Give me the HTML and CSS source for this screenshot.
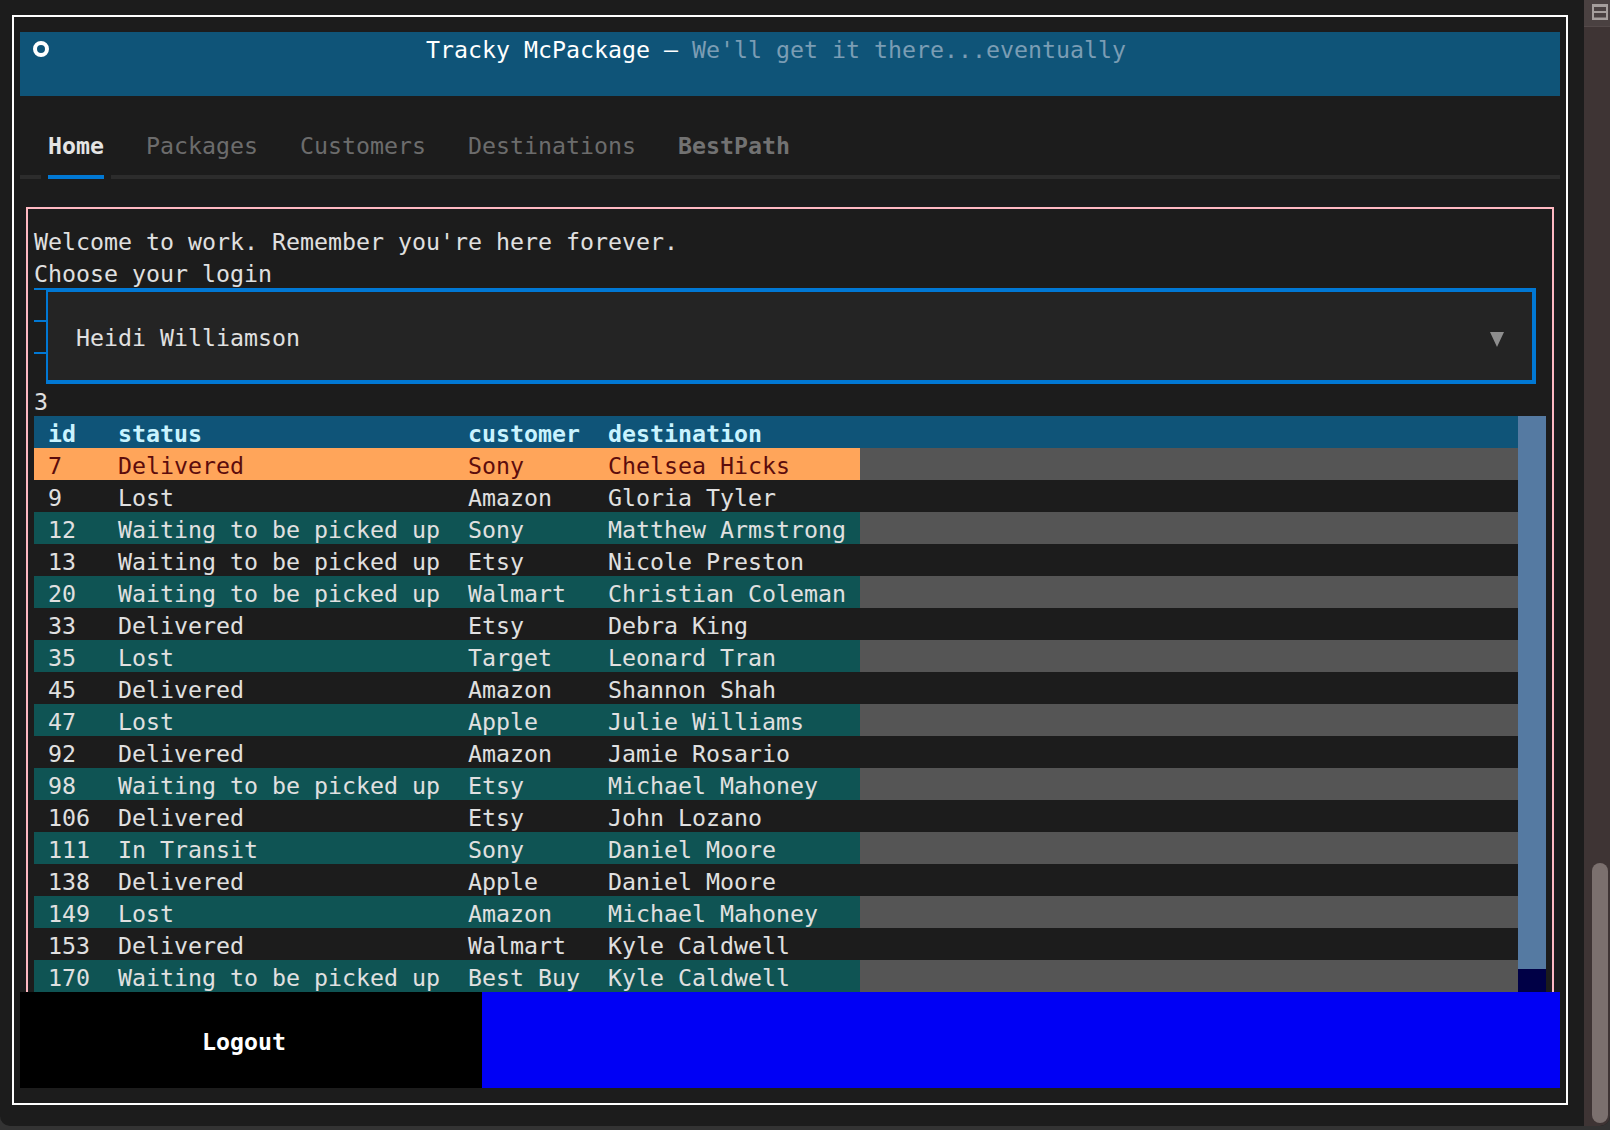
FILE: index.html
```html
<!DOCTYPE html>
<html lang="en">
<head>
<meta charset="utf-8">
<title>Tracky McPackage</title>
<link rel="stylesheet" href="styles.css">
</head>
<body>
<div class="window">
  <div class="term">
    <div class="frame">
      <header class="app-header">
        <span class="app-icon"></span>
        <span class="app-title">Tracky McPackage — <span class="app-sub">We'll get it there...eventually</span></span>
      </header>
      <div class="blank"></div>
      <nav class="tabs">
        <span class="tab active">Home</span>
        <span class="tab">Packages</span>
        <span class="tab">Customers</span>
        <span class="tab">Destinations</span>
        <span class="tab strong">BestPath</span>
      </nav>
      <div class="tab-rule">
        <span class="rule-gray rule-start"></span>
        <span class="rule-blue"></span>
        <span class="rule-gray rule-rest"></span>
      </div>
      <main class="content">
        <section class="panel">
          <p class="line">Welcome to work. Remember you're here forever.</p>
          <p class="line">Choose your login</p>
          <div class="select">
            <div class="select-gutter"><i></i><i></i><i></i></div>
            <div class="select-box">
              <span class="select-value">Heidi Williamson</span>
              <svg class="select-arrow" width="14" height="32" viewBox="0 0 14 32"><polygon points="0,12 14,12 7,27" fill="#8e8e8e"/></svg>
            </div>
          </div>
          <p class="line">3</p>
          <div class="table-area">
            <div class="table">
              <div class="tr th"><span>id</span><span>status</span><span>customer</span><span>destination</span><span class="fill"></span></div>
              <div class="tr cursor"><span>7</span><span>Delivered</span><span>Sony</span><span>Chelsea Hicks</span><span class="fill"></span></div>
              <div class="tr"><span>9</span><span>Lost</span><span>Amazon</span><span>Gloria Tyler</span><span class="fill"></span></div>
              <div class="tr stripe"><span>12</span><span>Waiting to be picked up</span><span>Sony</span><span>Matthew Armstrong</span><span class="fill"></span></div>
              <div class="tr"><span>13</span><span>Waiting to be picked up</span><span>Etsy</span><span>Nicole Preston</span><span class="fill"></span></div>
              <div class="tr stripe"><span>20</span><span>Waiting to be picked up</span><span>Walmart</span><span>Christian Coleman</span><span class="fill"></span></div>
              <div class="tr"><span>33</span><span>Delivered</span><span>Etsy</span><span>Debra King</span><span class="fill"></span></div>
              <div class="tr stripe"><span>35</span><span>Lost</span><span>Target</span><span>Leonard Tran</span><span class="fill"></span></div>
              <div class="tr"><span>45</span><span>Delivered</span><span>Amazon</span><span>Shannon Shah</span><span class="fill"></span></div>
              <div class="tr stripe"><span>47</span><span>Lost</span><span>Apple</span><span>Julie Williams</span><span class="fill"></span></div>
              <div class="tr"><span>92</span><span>Delivered</span><span>Amazon</span><span>Jamie Rosario</span><span class="fill"></span></div>
              <div class="tr stripe"><span>98</span><span>Waiting to be picked up</span><span>Etsy</span><span>Michael Mahoney</span><span class="fill"></span></div>
              <div class="tr"><span>106</span><span>Delivered</span><span>Etsy</span><span>John Lozano</span><span class="fill"></span></div>
              <div class="tr stripe"><span>111</span><span>In Transit</span><span>Sony</span><span>Daniel Moore</span><span class="fill"></span></div>
              <div class="tr"><span>138</span><span>Delivered</span><span>Apple</span><span>Daniel Moore</span><span class="fill"></span></div>
              <div class="tr stripe"><span>149</span><span>Lost</span><span>Amazon</span><span>Michael Mahoney</span><span class="fill"></span></div>
              <div class="tr"><span>153</span><span>Delivered</span><span>Walmart</span><span>Kyle Caldwell</span><span class="fill"></span></div>
              <div class="tr stripe"><span>170</span><span>Waiting to be picked up</span><span>Best Buy</span><span>Kyle Caldwell</span><span class="fill"></span></div>
            </div>
            <div class="vscroll"><div class="thumb"></div></div>
          </div>
        </section>
      </main>
      <footer class="footer">
        <div class="logout">Logout</div>
        <div class="footer-fill"></div>
      </footer>
    </div>
  </div>
  <aside class="strip">
    <div class="strip-top">
      <svg width="16" height="16" viewBox="0 0 16 16"><rect x="0" y="0" width="16" height="16" fill="#a59e9c"/><rect x="2" y="3" width="12" height="4" fill="#4a4141"/><rect x="2" y="9" width="12" height="4.5" fill="#4a4141"/></svg>
    </div>
    <div class="strip-track"><div class="strip-thumb"></div></div>
  </aside>
</div>
</body>
</html>
```

FILE: styles.css
```css
* { box-sizing: border-box; }

html, body {
  margin: 0;
  padding: 0;
}

body {
  width: 1610px;
  height: 1130px;
  overflow: hidden;
  background: #333333;
  font-family: "DejaVu Sans Mono", "Liberation Mono", monospace;
  font-size: 23.25px;
  color: #e0e0e0;
}

.window {
  display: flex;
  width: 1610px;
  height: 1126px;
  background: #1c1c1c;
  border-radius: 0 0 10px 10px;
  overflow: hidden;
}

.term {
  width: 1584px;
  padding: 15px 0 0 12px;
}

.frame {
  width: 1556px;
  height: 1090px;
  border: 2px solid #ffffff;
  padding: 15px 6px;
  display: flex;
  flex-direction: column;
}

/* header */
.app-header {
  height: 64px;
  flex: none;
  background: #0f5478;
  display: flex;
  align-items: flex-start;
}

.app-icon {
  width: 16px;
  height: 16px;
  margin: 9px 0 0 13px;
  border: 4px solid #ffffff;
  border-radius: 50%;
  flex: none;
}

.app-title {
  margin-left: 377px;
  height: 32px;
  padding-top: 4px;
  line-height: 28px;
  color: #ffffff;
  white-space: pre;
}

.app-sub {
  color: #7b9db4;
}

.blank {
  height: 32px;
  flex: none;
}

/* tabs */
.tabs {
  height: 32px;
  flex: none;
  display: flex;
}

.tab {
  margin-left: 14px;
  padding: 4px 14px 0;
  line-height: 28px;
  color: #6c6c6c;
  white-space: pre;
}

.tab.active {
  color: #e4e4e4;
  font-weight: bold;
}

.tab.strong {
  font-weight: bold;
  color: #727272;
}

.tab-rule {
  height: 32px;
  flex: none;
  display: flex;
  padding-top: 15px;
}

.tab-rule span {
  height: 4px;
}

.rule-gray {
  background: #2c2c2c;
}

.rule-start {
  width: 21px;
  margin-right: 7px;
}

.rule-blue {
  width: 56px;
  margin-right: 7px;
  background: #0178d4;
}

.rule-rest {
  flex: 1;
}

/* content */
.content {
  flex: 1;
  overflow: hidden;
}

.panel {
  margin: 15px 6px 0;
  border: 2px solid #ffb9c2;
  padding: 15px 6px;
}

.line {
  margin: 0;
  height: 32px;
  padding-top: 4px;
  line-height: 28px;
  white-space: pre;
}

/* select */
.select {
  display: flex;
  height: 96px;
}

.select-gutter {
  width: 12px;
  flex: none;
  display: flex;
  flex-direction: column;
}

.select-gutter i {
  display: block;
  height: 32px;
  border-top: 2px solid #0178d4;
}

.select-box {
  flex: 1;
  margin-right: 10px;
  background: #242424;
  border-style: solid;
  border-color: #0178d4;
  border-width: 4px 4px 4px 2px;
  display: flex;
  align-items: center;
  padding: 0 28px;
}

.select-value {
  flex: 1;
  height: 32px;
  padding-top: 4px;
  line-height: 28px;
  white-space: pre;
}

.select-arrow {
  display: block;
  flex: none;
}

/* table */
.table-area {
  display: flex;
  height: 576px;
}

.table {
  flex: 1;
}

.tr {
  display: grid;
  grid-template-columns: 70px 350px 140px 266px 1fr;
  height: 32px;
}

.tr > span {
  padding: 4px 14px 0;
  line-height: 28px;
  white-space: pre;
  overflow: hidden;
}

.th > span {
  background: #0f5478;
  color: #c9f3ff;
  font-weight: bold;
}

.cursor > span {
  background: #ffa55a;
  color: #5c0c0c;
}

.stripe > span {
  background: #0f5454;
}

.cursor > .fill,
.stripe > .fill {
  background: #555555;
}

.vscroll {
  width: 28px;
  flex: none;
  background: #557aa2;
  display: flex;
  flex-direction: column;
  justify-content: flex-end;
}

.thumb {
  height: 23px;
  background: #000046;
}

/* footer */
.footer {
  height: 96px;
  flex: none;
  display: flex;
}

.logout {
  width: 462px;
  background: #000000;
  color: #ffffff;
  font-weight: bold;
  padding: 36px 0 0 182px;
  line-height: 28px;
  white-space: pre;
}

.footer-fill {
  flex: 1;
  background: #0000f5;
}

/* window scroll strip */
.strip {
  width: 26px;
  display: flex;
  flex-direction: column;
  background: #3e3434;
}

.strip-top {
  height: 27px;
  background: #4a4141;
  padding: 4px 0 0 8px;
  border-bottom: 1px solid #544a4a;
}

.strip-top svg {
  display: block;
}

.strip-track {
  flex: 1;
  padding: 836px 2px 2px 8px;
}

.strip-thumb {
  height: 260px;
  background: #7b706e;
  border-radius: 8px;
}
```
